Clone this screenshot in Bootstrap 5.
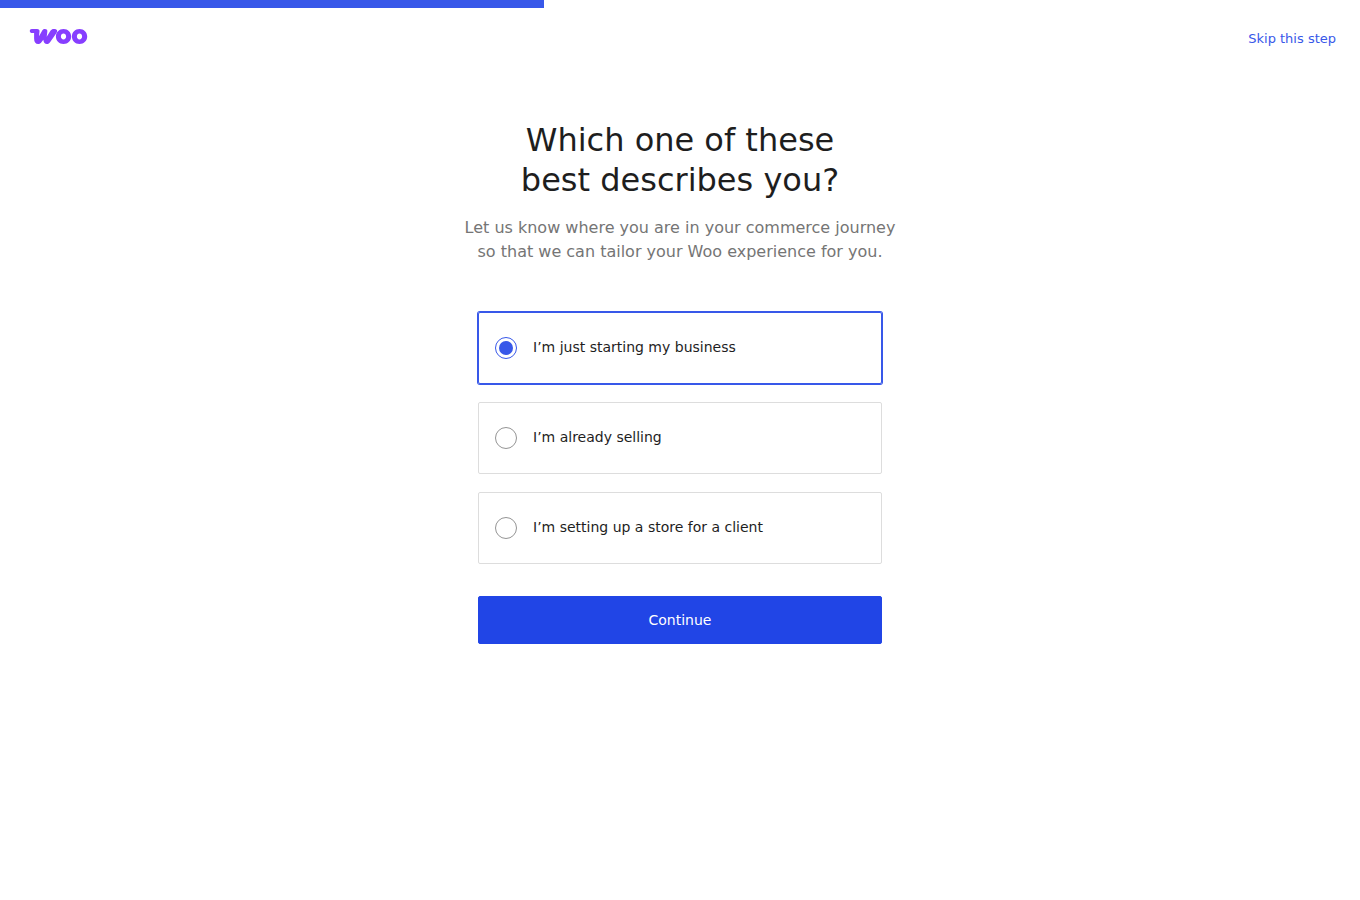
<!DOCTYPE html>
<html lang="en">
<head>
<meta charset="utf-8">
<meta name="viewport" content="width=device-width, initial-scale=1">
<title>Woo – Set up your store</title>
<link href="https://cdn.jsdelivr.net/npm/bootstrap@5.3.0/dist/css/bootstrap.min.css" rel="stylesheet">
<style>
  body { font-family: "DejaVu Sans", sans-serif; color: #1e1e1e; font-size: 14px; line-height: 20px; }
  .setup-progress { --bs-progress-height: 8px; --bs-progress-bg: transparent; --bs-progress-bar-bg: #3858e9; }
  .setup-header { padding: 20px 24px 0 28px; height: 56px; }
  .skip-link { color: #3858e9; font-size: 13px; line-height: 22px; }
  .setup-title { font-size: 32px; line-height: 40px; font-weight: 400; max-width: 360px; }
  .setup-intro { font-size: 16px; line-height: 24px; color: #757575; max-width: 440px; }
  .setup-form { max-width: 404px; }
  .setup-options { gap: 18px; margin-bottom: 32px; }
  .setup-option { min-height: 72px; padding: 0 16px; border: 1px solid #ddd; border-radius: 2px; cursor: pointer; }
  .setup-option:has(:checked) { border-color: #3858e9; box-shadow: 0 0 0 1px #3858e9; }
  .setup-option span { padding-bottom: 2px; }
  .setup-option .form-check-input { display: grid; place-content: center; width: 22px; height: 22px; border: 1px solid #949494; }
  .setup-option .form-check-input:checked { border-color: #3858e9; background: #fff; }
  .setup-option .form-check-input:checked::before { content: ""; width: 14px; height: 14px; border-radius: 50%; background: #3858e9; }
  .setup-submit { --bs-btn-bg: #2145e6; --bs-btn-border-color: #2145e6; --bs-btn-hover-bg: #1d35b4; --bs-btn-font-size: 14px; --bs-btn-border-radius: 2px; height: 48px; }
</style>
</head>
<body>
<div class="progress setup-progress rounded-0" role="progressbar" aria-label="Setup progress" aria-valuenow="40" aria-valuemin="0" aria-valuemax="100">
  <div class="progress-bar" style="width: 40%"></div>
</div>
<header class="setup-header d-flex justify-content-between align-items-start">
  <svg width="60" height="18" viewBox="0 0 60 18" role="img" aria-label="Woo">
    <path fill="#873eff" d="M3.800 1H9C10.900 1 11.700 1.900 11.500 3.600L11 8.200L14.400 2.300C15 1.400 15.800 1 16.800 1C18.900 1 19.600 2.200 19.300 4L18.700 8.700L22.600 2.600C23.400 1.500 24.300 1 25.700 1C29.200 1 30 2.600 28.500 4.900L22.400 13.700C21.400 15.300 20.300 16 18.800 16C16.900 16 15.700 14.600 15.300 11.700L13.600 14C12.600 15.400 11.500 16 10.200 16C7.500 16 6.100 14.100 6.100 10.500V5.100H4.400C2.800 5.100 1.800 4.400 1.800 3C1.800 1.800 2.500 1 3.800 1Z"/>
    <g fill="#873eff" fill-rule="evenodd">
      <path d="M35.500 1C40 1 43.200 4.300 43.200 8.500S40 16 35.500 16S27.900 12.700 27.900 8.500S31.100 1 35.500 1ZM35.500 5.600C34 5.600 32.900 6.800 32.900 8.500S34 11.400 35.500 11.400S38.100 10.200 38.100 8.500S37 5.600 35.500 5.600Z"/>
      <path d="M51.500 1C56 1 59.200 4.300 59.200 8.500S56 16 51.500 16S43.900 12.700 43.900 8.500S47.100 1 51.500 1ZM51.500 5.600C50 5.600 48.900 6.800 48.900 8.500S50 11.400 51.500 11.400S54.100 10.200 54.100 8.500S53 5.600 51.500 5.600Z"/>
    </g>
  </svg>
  <a class="skip-link text-decoration-none" href="#">Skip this step</a>
</header>
<main class="container d-flex flex-column align-items-center pt-5 mt-2">
  <h1 class="setup-title text-center mb-3 mt-0">Which one of these best describes you?</h1>
  <p class="setup-intro text-center mb-5">Let us know where you are in your commerce journey so that we can tailor your Woo experience for you.</p>
  <form class="setup-form w-100">
    <div class="setup-options d-flex flex-column">
      <label class="setup-option d-flex align-items-center gap-3" for="starting">
        <input class="form-check-input m-0 flex-shrink-0" type="radio" name="profile" id="starting" checked>
        <span>I’m just starting my business</span>
      </label>
      <label class="setup-option d-flex align-items-center gap-3" for="selling">
        <input class="form-check-input m-0 flex-shrink-0" type="radio" name="profile" id="selling">
        <span>I’m already selling</span>
      </label>
      <label class="setup-option d-flex align-items-center gap-3" for="client">
        <input class="form-check-input m-0 flex-shrink-0" type="radio" name="profile" id="client">
        <span>I’m setting up a store for a client</span>
      </label>
    </div>
    <button class="btn btn-primary setup-submit w-100" type="button">Continue</button>
  </form>
</main>
<script src="https://cdn.jsdelivr.net/npm/bootstrap@5.3.0/dist/js/bootstrap.bundle.min.js"></script>
</body>
</html>
